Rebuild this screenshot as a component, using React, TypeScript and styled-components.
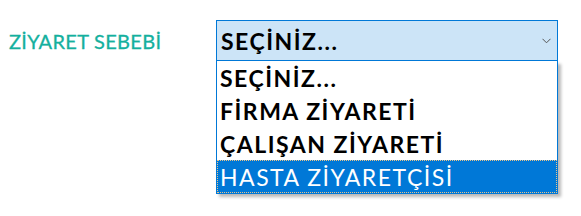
import React from 'react';
import styled, { createGlobalStyle } from 'styled-components';

const GlobalStyle = createGlobalStyle`
  html, body {
    margin: 0;
    padding: 0;
    background: #ffffff;
    font-family: Lato, "Open Sans", sans-serif;
  }
`;

const Page = styled.div`
  width: 581px;
  height: 216px;
  position: relative;
  overflow: hidden;
`;

const FieldRow = styled.div`
  display: flex;
  align-items: center;
  padding: 20px 0 0 9px;
`;

const Label = styled.label`
  width: 207px;
  color: #14b09e;
  font-size: 20px;
  font-weight: 400;
  letter-spacing: 0.3px;
  -webkit-text-stroke: 0.3px #14b09e;
`;

const SelectWrap = styled.div`
  position: relative;
  width: 342px;
`;

const SelectBox = styled.div`
  box-sizing: border-box;
  height: 41px;
  display: flex;
  align-items: center;
  justify-content: space-between;
  padding: 0 6px 0 4px;
  background: #cce4f7;
  border: 1px solid #0078d7;
  color: #000;
  font-size: 23px;
  font-weight: 700;
  letter-spacing: 1.5px;
`;

const Chevron = styled.svg`
  width: 9px;
  height: 6px;
  flex-shrink: 0;
`;

const OptionList = styled.ul`
  position: absolute;
  top: 41px;
  left: 0;
  width: 342px;
  box-sizing: border-box;
  margin: 0;
  padding: 0;
  list-style: none;
  background: #fff;
  border: 1px solid #0078d7;
  border-top: none;
  box-shadow: 3px 3px 3px rgba(0, 0, 0, 0.28);
`;

const Option = styled.li<{ $active?: boolean }>`
  box-sizing: border-box;
  height: 33px;
  display: flex;
  align-items: center;
  padding: 0 3px;
  font-size: 23px;
  letter-spacing: 1.5px;
  font-weight: ${(p) => (p.$active ? 400 : 700)};
  color: ${(p) => (p.$active ? '#fff' : '#000')};
  background: ${(p) => (p.$active ? '#0078d7' : 'transparent')};
  outline: ${(p) => (p.$active ? '1px dotted #e9c48a' : 'none')};
  outline-offset: -1px;
`;

const options = ['SEÇİNİZ...', 'FİRMA ZİYARETİ', 'ÇALIŞAN ZİYARETİ', 'HASTA ZİYARETÇİSİ'];

export default function App() {
  return (
    <Page>
      <GlobalStyle />
      <FieldRow>
        <Label>ZİYARET SEBEBİ</Label>
        <SelectWrap>
          <SelectBox>
            <span>SEÇİNİZ...</span>
            <Chevron viewBox="0 0 9 6">
              <path d="M0.5 0.8 L4.5 4.8 L8.5 0.8" fill="none" stroke="#555" strokeWidth="1" />
            </Chevron>
          </SelectBox>
          <OptionList>
            {options.map((o, i) => (
              <Option key={o} $active={i === options.length - 1}>
                {o}
              </Option>
            ))}
          </OptionList>
        </SelectWrap>
      </FieldRow>
    </Page>
  );
}
